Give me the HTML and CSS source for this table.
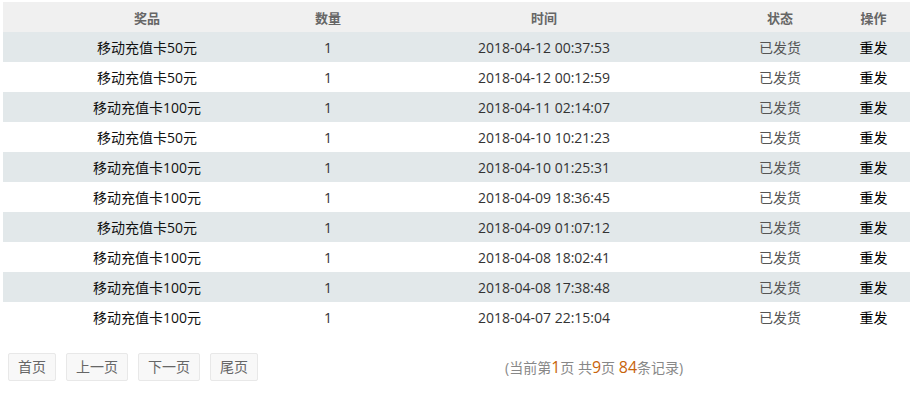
FILE: index.html
```html
<!DOCTYPE html>
<html lang="zh-CN">
<head>
    <meta charset="UTF-8">
    <title>发货记录</title>
    <link rel="stylesheet" href="styles.css">
</head>
<body>
    <!-- Records table -->
    <table class="records">
        <thead>
            <tr>
                <th class="col-prize">奖品</th>
                <th class="col-num">数量</th>
                <th class="col-time">时间</th>
                <th class="col-state">状态</th>
                <th class="col-op">操作</th>
            </tr>
        </thead>
        <tbody>
            <tr><td class="prize">移动充值卡50元</td><td>1</td><td>2018-04-12 00:37:53</td><td class="state">已发货</td><td class="op">重发</td></tr>
            <tr><td class="prize">移动充值卡50元</td><td>1</td><td>2018-04-12 00:12:59</td><td class="state">已发货</td><td class="op">重发</td></tr>
            <tr><td class="prize">移动充值卡100元</td><td>1</td><td>2018-04-11 02:14:07</td><td class="state">已发货</td><td class="op">重发</td></tr>
            <tr><td class="prize">移动充值卡50元</td><td>1</td><td>2018-04-10 10:21:23</td><td class="state">已发货</td><td class="op">重发</td></tr>
            <tr><td class="prize">移动充值卡100元</td><td>1</td><td>2018-04-10 01:25:31</td><td class="state">已发货</td><td class="op">重发</td></tr>
            <tr><td class="prize">移动充值卡100元</td><td>1</td><td>2018-04-09 18:36:45</td><td class="state">已发货</td><td class="op">重发</td></tr>
            <tr><td class="prize">移动充值卡50元</td><td>1</td><td>2018-04-09 01:07:12</td><td class="state">已发货</td><td class="op">重发</td></tr>
            <tr><td class="prize">移动充值卡100元</td><td>1</td><td>2018-04-08 18:02:41</td><td class="state">已发货</td><td class="op">重发</td></tr>
            <tr><td class="prize">移动充值卡100元</td><td>1</td><td>2018-04-08 17:38:48</td><td class="state">已发货</td><td class="op">重发</td></tr>
            <tr><td class="prize">移动充值卡100元</td><td>1</td><td>2018-04-07 22:15:04</td><td class="state">已发货</td><td class="op">重发</td></tr>
        </tbody>
    </table>

    <!-- Pager -->
    <div class="pager">
        <a href="#" class="page-btn">首页</a>
        <a href="#" class="page-btn">上一页</a>
        <a href="#" class="page-btn">下一页</a>
        <a href="#" class="page-btn">尾页</a>
        <span class="page-info">(当前第<em>1</em>页 共<em>9</em>页 <em>84</em>条记录)</span>
    </div>
</body>
</html>
```

FILE: styles.css
```css
/* General Reset */
body {
    margin: 0;
    padding: 2px 3px;
    font-family: "Open Sans", "Noto Sans CJK SC", sans-serif;
    font-size: 14px;
    color: #333;
    background: #fff;
}

/* Records table */
.records {
    width: 907px;
    border-collapse: collapse;
    table-layout: fixed;
}

.records th,
.records td {
    height: 30px;
    padding: 0;
    text-align: center;
    font-weight: normal;
}

.records th {
    background-color: #f0f0f0;
    color: #666;
    font-size: 13px;
    font-weight: bold;
}

.records tbody tr:nth-child(odd) td {
    background-color: #e2e8ea;
}

.col-prize { width: 288px; }
.col-num { width: 74px; }
.col-time { width: 358px; }
.col-state { width: 114px; }
.col-op { width: 73px; }

.records td.prize {
    color: #111;
}

.records td.state {
    color: #555;
}

.records td.op {
    color: #000;
}

/* Pager */
.pager {
    display: flex;
    align-items: center;
    gap: 10px;
    margin-top: 21px;
    padding-left: 5px;
}

.page-btn {
    display: inline-block;
    height: 26px;
    line-height: 26px;
    padding: 0 9px;
    border: 1px solid #e8e8e8;
    border-radius: 2px;
    background-color: #f8f8f8;
    color: #666;
    text-decoration: none;
}

.page-info {
    margin-left: 237px;
    color: #888;
}

.page-info em {
    font-style: normal;
    font-size: 16px;
    color: #c8640a;
}
```
